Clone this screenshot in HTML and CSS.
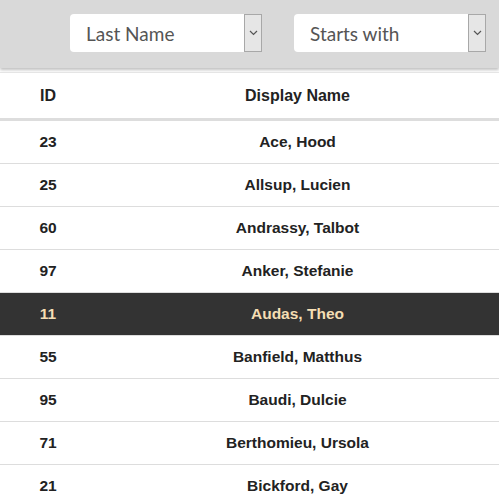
FILE: index.html
```html
<!DOCTYPE html>
<html>
<head>
<meta charset="utf-8">
<link rel="stylesheet" href="styles.css">
</head>
<body>
<div class="toolbar">
  <div class="select">
    <span class="select-text">Last Name</span>
    <span class="select-arrow"><svg width="9" height="6" viewBox="0 0 9 6"><path d="M1 1 L4.5 4.5 L8 1" fill="none" stroke="#555" stroke-width="1.2"/></svg></span>
  </div>
  <div class="select">
    <span class="select-text">Starts with</span>
    <span class="select-arrow"><svg width="9" height="6" viewBox="0 0 9 6"><path d="M1 1 L4.5 4.5 L8 1" fill="none" stroke="#555" stroke-width="1.2"/></svg></span>
  </div>
</div>
<table class="grid">
  <thead>
    <tr><th class="col-id">ID</th><th>Display Name</th></tr>
  </thead>
  <tbody>
    <tr><td class="col-id">23</td><td>Ace, Hood</td></tr>
    <tr><td class="col-id">25</td><td>Allsup, Lucien</td></tr>
    <tr><td class="col-id">60</td><td>Andrassy, Talbot</td></tr>
    <tr><td class="col-id">97</td><td>Anker, Stefanie</td></tr>
    <tr class="selected"><td class="col-id">11</td><td>Audas, Theo</td></tr>
    <tr><td class="col-id">55</td><td>Banfield, Matthus</td></tr>
    <tr><td class="col-id">95</td><td>Baudi, Dulcie</td></tr>
    <tr><td class="col-id">71</td><td>Berthomieu, Ursola</td></tr>
    <tr><td class="col-id">21</td><td>Bickford, Gay</td></tr>
  </tbody>
</table>
</body>
</html>
```
FILE: styles.css
```css
html, body {
  margin: 0;
  padding: 0;
  background: #fff;
  overflow: hidden;
}
body {
  font-family: "Liberation Sans", Arial, sans-serif;
  color: #222;
}
.toolbar {
  height: 68px;
  background: #d9d9d9;
  display: flex;
  align-items: center;
  padding-left: 70px;
  gap: 32px;
  box-shadow: 0 2px 3px rgba(0,0,0,0.25);
  position: relative;
  z-index: 1;
  box-sizing: border-box;
  padding-bottom: 2px;
}
.select {
  width: 192px;
  height: 38px;
  display: flex;
  background: #fff;
  border-radius: 4px;
}
.select-text {
  flex: 1;
  display: flex;
  align-items: center;
  padding-left: 16px;
  font-family: Lato, "Open Sans", sans-serif;
  font-size: 19px;
  color: #555;
}
.select-arrow {
  width: 16px;
  background: #e6e6e6;
  border: 1px solid #a8a8a8;
  display: flex;
  align-items: center;
  justify-content: center;
}
.grid {
  width: 100%;
  border-collapse: collapse;
  margin-top: 4px;
  font-size: 15.5px;
  font-weight: bold;
}
.grid th {
  height: 45px;
  text-align: center;
  border-top: 1px solid #e8e8e8;
  border-bottom: 3px solid #ddd;
  padding: 0;
  font-size: 16px;
}
.grid td {
  height: 42px;
  text-align: center;
  border-bottom: 1px solid #ddd;
  padding: 0;
}
.grid .col-id {
  width: 96px;
}
.grid tr.selected td {
  background: #333;
  color: #f5deb3;
}
```
